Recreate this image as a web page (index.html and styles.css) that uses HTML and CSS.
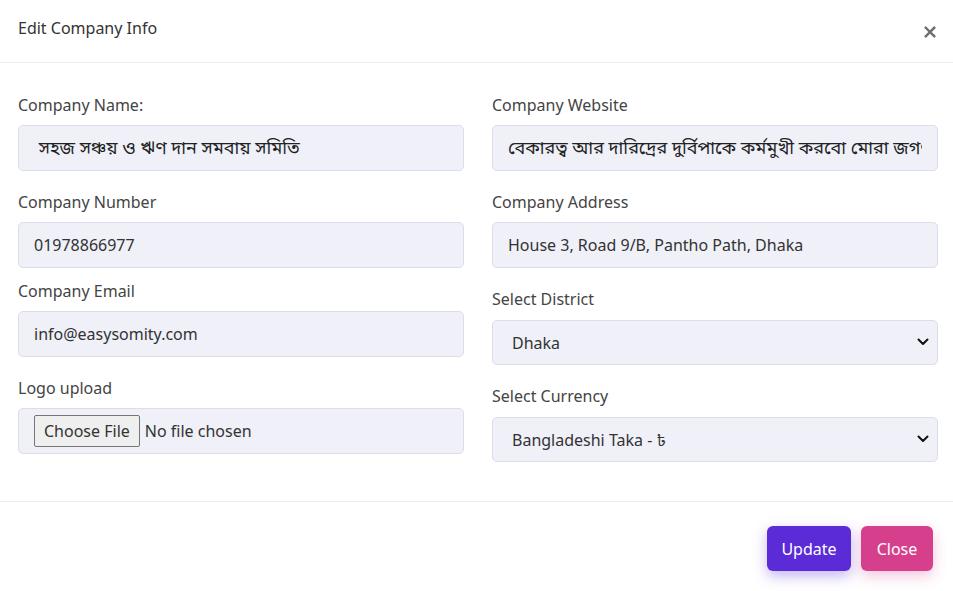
FILE: index.html
```html
<!DOCTYPE html>
<html lang="en">
<head>
<meta charset="utf-8">
<title>Edit Company Info</title>
<link rel="stylesheet" href="styles.css">
</head>
<body>
<div class="modal">
  <div class="modal-header">
    <h5 class="modal-title">Edit Company Info</h5>
    <button class="btn-x" type="button" aria-label="Close">
      <svg width="12" height="12" viewBox="0 0 12 12"><path d="M1.8 1.8 L10.2 10.2 M10.2 1.8 L1.8 10.2" stroke="#6f6f6f" stroke-width="2.4" stroke-linecap="square"/></svg>
    </button>
  </div>
  <div class="modal-body">
    <div class="col">
      <div class="field">
        <label class="label">Company Name:</label>
        <input class="control control--bn" type="text" value=" সহজ সঞ্চয় ও ঋণ দান সমবায় সমিতি">
      </div>
      <div class="field field--tight">
        <label class="label">Company Number</label>
        <input class="control" type="text" value="01978866977">
      </div>
      <div class="field">
        <label class="label">Company Email</label>
        <input class="control" type="text" value="info@easysomity.com">
      </div>
      <div class="field">
        <label class="label">Logo upload</label>
        <div class="control control--file"><input type="file" class="file"></div>
      </div>
    </div>
    <div class="col">
      <div class="field">
        <label class="label">Company Website</label>
        <input class="control control--bn" type="text" value="বেকারত্ব আর দারিদ্রের দুর্বিপাকে কর্মমুখী করবো মোরা জগৎ">
      </div>
      <div class="field">
        <label class="label">Company Address</label>
        <input class="control" type="text" value="House 3, Road 9/B, Pantho Path, Dhaka">
      </div>
      <div class="field">
        <label class="label">Select District</label>
        <div class="select-wrap">
          <select class="control control--select"><option>Dhaka</option></select>
          <svg class="chev" width="12" height="8" viewBox="0 0 12 8"><path d="M1.5 1.5 L6 6 L10.5 1.5" fill="none" stroke="#111" stroke-width="2" stroke-linecap="round" stroke-linejoin="round"/></svg>
        </div>
      </div>
      <div class="field">
        <label class="label">Select Currency</label>
        <div class="select-wrap">
          <select class="control control--select"><option>Bangladeshi Taka - ৳</option></select>
          <svg class="chev" width="12" height="8" viewBox="0 0 12 8"><path d="M1.5 1.5 L6 6 L10.5 1.5" fill="none" stroke="#111" stroke-width="2" stroke-linecap="round" stroke-linejoin="round"/></svg>
        </div>
      </div>
    </div>
  </div>
  <div class="modal-footer">
    <button class="btn btn--primary" type="button">Update</button>
    <button class="btn btn--pink" type="button">Close</button>
  </div>
</div>
</body>
</html>
```
FILE: styles.css
```css
* { box-sizing: border-box; }
html, body { margin: 0; padding: 0; background: #fff; }
body {
  font-family: "Noto Sans", "Noto Sans Bengali", "Lohit Bengali", "FreeSans", sans-serif;
  font-size: 15px;
  color: #3a3a3a;
}
.modal { width: 953px; height: 591px; background: #fff; }
.modal-header {
  display: flex;
  align-items: flex-start;
  justify-content: space-between;
  padding: 16px 16px 22px 18px;
  border-bottom: 1px solid #ebebf0;
  height: 63px;
}
.modal-title {
  margin: 0;
  font-size: 16px;
  font-weight: 400;
  line-height: 24px;
  color: #333;
}
.btn-x {
  border: 0;
  background: transparent;
  padding: 0;
  margin-top: 10px;
  margin-right: 1px;
  width: 12px;
  height: 12px;
  display: flex;
}
.modal-body {
  display: grid;
  grid-template-columns: 446px 446px;
  column-gap: 28px;
  padding: 30px 15px 39px 18px;
  border-bottom: 1px solid #ebebf0;
}
.col { display: flex; flex-direction: column; }
.field { display: flex; flex-direction: column; margin-bottom: 19px; }
.field:last-child { margin-bottom: 0; }
.field--tight { margin-bottom: 11px; }
.label {
  font-size: 16px;
  line-height: 24px;
  margin-bottom: 8px;
  color: #444;
}
.control {
  height: 46px;
  width: 100%;
  background: #eff0f8;
  border: 1px solid #dcdde8;
  border-radius: 5px;
  padding: 0 15px;
  font-family: inherit;
  font-size: 16px;
  color: #333;
  outline: none;
}
.control--bn { font-size: 18px; color: #222; }
.control--file {
  display: flex;
  align-items: center;
}
.file {
  font-family: inherit;
  font-size: 16px;
  color: #333;
}
.file::file-selector-button {
  font-family: inherit;
  font-size: 16px;
  height: 32px;
  padding: 0 9px;
  margin-right: 5px;
  border: 1px solid #767676;
  border-radius: 2px;
  background: #efefef;
  color: #333;
}
.select-wrap { position: relative; margin-top: 1px; }
.control--select {
  appearance: none;
  -webkit-appearance: none;
  height: 45px;
  padding: 0 40px 0 19px;
}
.chev { position: absolute; right: 9px; top: 18px; pointer-events: none; }
.modal-footer {
  display: flex;
  justify-content: flex-end;
  gap: 10px;
  padding: 24px 20px 20px;
}
.btn {
  height: 45px;
  border: 0;
  border-radius: 6px;
  color: #fff;
  font-family: inherit;
  font-size: 16px;
  font-weight: 400;
  padding: 0 10px;
}
.btn--primary { background: #5a2bd6; width: 84px; box-shadow: 0 5px 14px rgba(90, 43, 214, 0.35); }
.btn--pink { background: #d63f8c; width: 72px; box-shadow: 0 5px 14px rgba(214, 63, 140, 0.3); }
```
